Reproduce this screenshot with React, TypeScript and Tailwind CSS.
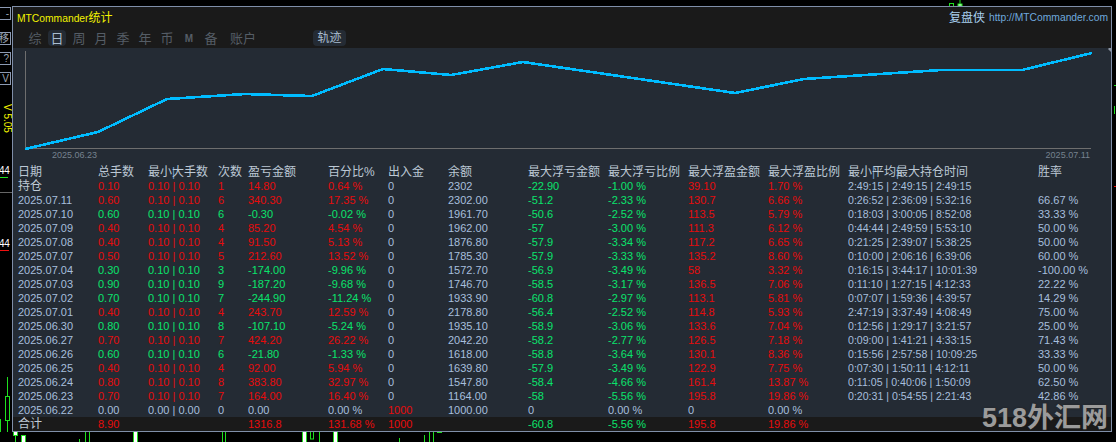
const GRID = "grid grid-cols-[80px_50px_70px_30px_80px_60px_60px_80px_80px_80px_80px_80px_190px_60px] pl-[5px] h-[14px] items-center whitespace-nowrap text-[11px] leading-[14px]";
const RED = "text-[#e60c0c]";
const GREEN = "text-[#0ae36c]";
const PLAIN = "text-[#a7bfdd]";

type R = [string, string, string, string, string, string, string, string, string, string, string, string, string, string, string];
// date, tone, lots, min/max, count, pnl, pct, deposit, balance, floatLoss, lossPct, floatWin, winPct, time, rate
const rows: R[] = [
  ["持仓", "r", "0.10", "0.10 | 0.10", "1", "14.80", "0.64 %", "0", "2302", "-22.90", "-1.00 %", "39.10", "1.70 %", "2:49:15 | 2:49:15 | 2:49:15", ""],
  ["2025.07.11", "r", "0.60", "0.10 | 0.10", "6", "340.30", "17.35 %", "0", "2302.00", "-51.2", "-2.33 %", "130.7", "6.66 %", "0:26:52 | 2:36:09 | 5:32:16", "66.67 %"],
  ["2025.07.10", "g", "0.60", "0.10 | 0.10", "6", "-0.30", "-0.02 %", "0", "1961.70", "-50.6", "-2.52 %", "113.5", "5.79 %", "0:18:03 | 3:00:05 | 8:52:08", "33.33 %"],
  ["2025.07.09", "r", "0.40", "0.10 | 0.10", "4", "85.20", "4.54 %", "0", "1962.00", "-57", "-3.00 %", "111.3", "6.12 %", "0:44:44 | 2:49:59 | 5:53:10", "50.00 %"],
  ["2025.07.08", "r", "0.40", "0.10 | 0.10", "4", "91.50", "5.13 %", "0", "1876.80", "-57.9", "-3.34 %", "117.2", "6.65 %", "0:21:25 | 2:39:07 | 5:38:25", "50.00 %"],
  ["2025.07.07", "r", "0.50", "0.10 | 0.10", "5", "212.60", "13.52 %", "0", "1785.30", "-57.9", "-3.33 %", "135.2", "8.60 %", "0:10:00 | 2:06:16 | 6:39:06", "60.00 %"],
  ["2025.07.04", "g", "0.30", "0.10 | 0.10", "3", "-174.00", "-9.96 %", "0", "1572.70", "-56.9", "-3.49 %", "58", "3.32 %", "0:16:15 | 3:44:17 | 10:01:39", "-100.00 %"],
  ["2025.07.03", "g", "0.90", "0.10 | 0.10", "9", "-187.20", "-9.68 %", "0", "1746.70", "-58.5", "-3.17 %", "136.5", "7.06 %", "0:11:10 | 1:27:15 | 4:12:33", "22.22 %"],
  ["2025.07.02", "g", "0.70", "0.10 | 0.10", "7", "-244.90", "-11.24 %", "0", "1933.90", "-60.8", "-2.97 %", "113.1", "5.81 %", "0:07:07 | 1:59:36 | 4:39:57", "14.29 %"],
  ["2025.07.01", "r", "0.40", "0.10 | 0.10", "4", "243.70", "12.59 %", "0", "2178.80", "-56.4", "-2.52 %", "114.8", "5.93 %", "2:47:19 | 3:37:49 | 4:08:49", "75.00 %"],
  ["2025.06.30", "g", "0.80", "0.10 | 0.10", "8", "-107.10", "-5.24 %", "0", "1935.10", "-58.9", "-3.06 %", "133.6", "7.04 %", "0:12:56 | 1:29:17 | 3:21:57", "25.00 %"],
  ["2025.06.27", "r", "0.70", "0.10 | 0.10", "7", "424.20", "26.22 %", "0", "2042.20", "-58.2", "-2.77 %", "126.5", "7.18 %", "0:09:00 | 1:41:21 | 4:33:15", "71.43 %"],
  ["2025.06.26", "g", "0.60", "0.10 | 0.10", "6", "-21.80", "-1.33 %", "0", "1618.00", "-58.8", "-3.64 %", "130.1", "8.36 %", "0:15:56 | 2:57:58 | 10:09:25", "33.33 %"],
  ["2025.06.25", "r", "0.40", "0.10 | 0.10", "4", "92.00", "5.94 %", "0", "1639.80", "-57.9", "-3.49 %", "122.9", "7.75 %", "0:07:30 | 1:50:11 | 4:12:11", "50.00 %"],
  ["2025.06.24", "r", "0.80", "0.10 | 0.10", "8", "383.80", "32.97 %", "0", "1547.80", "-58.4", "-4.66 %", "161.4", "13.87 %", "0:11:05 | 0:40:06 | 1:50:09", "62.50 %"],
  ["2025.06.23", "r", "0.70", "0.10 | 0.10", "7", "164.00", "16.40 %", "0", "1164.00", "-58", "-5.56 %", "195.8", "19.86 %", "0:20:31 | 0:54:55 | 2:21:43", "42.86 %"],
  ["2025.06.22", "n", "0.00", "0.00 | 0.00", "0", "0.00", "0.00 %", "1000", "1000.00", "0", "0.00 %", "0", "0.00 %", "", ""],
];

function DataRow({ r }: { r: R }) {
  const [date, tone, lots, minMax, count, pnl, pct, dep, bal, fl, flp, fw, fwp, time, rate] = r;
  const t = tone === "r" ? RED : tone === "g" ? GREEN : PLAIN;
  const neutral = tone === "n";
  const head = date === "持仓";
  return (
    <div className={GRID}>
      <span className={head ? "text-[12px] text-[#c0cbd6]" : PLAIN}>{date}</span>
      <span className={t}>{lots}</span>
      <span className={t}>{minMax}</span>
      <span className={t}>{count}</span>
      <span className={t}>{pnl}</span>
      <span className={t}>{pct}</span>
      <span className={dep === "0" ? PLAIN : RED}>{dep}</span>
      <span className={PLAIN}>{bal}</span>
      <span className={neutral ? PLAIN : GREEN}>{fl}</span>
      <span className={neutral ? PLAIN : GREEN}>{flp}</span>
      <span className={neutral ? PLAIN : RED}>{fw}</span>
      <span className={neutral ? PLAIN : RED}>{fwp}</span>
      <span className={`text-[10.6px] ${PLAIN}`}>{time}</span>
      <span className={PLAIN}>{rate}</span>
    </div>
  );
}

const Pipe = () => <span className="inline-block w-0 text-[#6f9fd0]">|</span>;

function HeaderRow() {
  return (
    <div className={`${GRID} text-[12px] text-[#bcc8d4]`}>
      <span>日期</span>
      <span>总手数</span>
      <span>最小<Pipe />大手数</span>
      <span>次数</span>
      <span>盈亏金额</span>
      <span>百分比%</span>
      <span>出入金</span>
      <span>余额</span>
      <span>最大浮亏金额</span>
      <span>最大浮亏比例</span>
      <span>最大浮盈金额</span>
      <span>最大浮盈比例</span>
      <span>最小<Pipe />平均<Pipe />最大持仓时间</span>
      <span>胜率</span>
    </div>
  );
}

function FooterRow() {
  return (
    <div className={`${GRID} bg-[#1a1a1a]`}>
      <span className="text-[12px] text-[#c0cbd6]">合计</span>
      <span className={RED}>8.90</span>
      <span />
      <span />
      <span className={RED}>1316.8</span>
      <span className={RED}>131.68 %</span>
      <span className={RED}>1000</span>
      <span />
      <span className={GREEN}>-60.8</span>
      <span className={GREEN}>-5.56 %</span>
      <span className={RED}>195.8</span>
      <span className={RED}>19.86 %</span>
      <span />
      <span />
    </div>
  );
}

function GutterButton({ label, className }: { label: string; className: string }) {
  return (
    <div className={`w-[11px] h-[13px] border border-l-0 border-[#8c9ab3] bg-black text-[#9aa5b5] text-[10px] leading-[11px] flex justify-end overflow-hidden ${className}`}>
      <span className="pr-[1px]">{label}</span>
    </div>
  );
}

const Tab = ({ label, active }: { label: string; active?: boolean }) => (
  <span className={`w-[18px] mx-[2px] h-[16px] rounded-sm flex items-center justify-center text-[13px] leading-none ${active ? "bg-[#242b34] text-[#a9bdd0]" : "text-[#555d66]"}`}>
    {label}
  </span>
);

function Chart() {
  const pts = [[25, 149], [98, 132], [167, 99], [245, 94], [293, 95.5], [312, 96], [383, 69], [451, 75], [523, 62], [735, 93], [804, 79], [941, 70], [1022, 70], [1092, 53]];
  return (
    <div className="h-[117px] flex flex-col">
      <svg width="1098" height="102" viewBox="13 48 1098 102" className="block shrink-0">
        <line x1="25.5" y1="51" x2="25.5" y2="148" stroke="#6e6e6e" />
        <line x1="25" y1="148.5" x2="1091" y2="148.5" stroke="#6e6e6e" />
        <polyline points={pts.map((p) => p.join(",")).join(" ")} fill="none" stroke="#00bcff" strokeWidth="2.6" shapeRendering="crispEdges" />
        <polygon points="1108,49 1111,46 1111,52" fill="#8d96a3" />
      </svg>
      <div className="flex justify-between pl-[39px] pr-[21px] text-[9px] leading-[11px] text-[#76828f]">
        <span>2025.06.23</span>
        <span>2025.07.11</span>
      </div>
    </div>
  );
}

export default function App() {
  return (
    <div className="relative w-[1116px] h-[442px] bg-black overflow-hidden flex flex-col font-['Liberation_Sans','Noto_Sans_CJK_SC',sans-serif]">
      <svg width="1116" height="6" className="block shrink-0">
        <rect x="949.5" y="3.5" width="4" height="3" fill="none" stroke="#1fe01f" />
        <rect x="958" y="4" width="4" height="2" fill="#fff" stroke="#1fe01f" />
        <line x1="960" y1="0" x2="960" y2="4" stroke="#1fe01f" />
      </svg>

      <div className="flex h-[426px] shrink-0">
        <div className="w-[12px] shrink-0 h-full flex flex-col overflow-hidden">
          <GutterButton label="-" className="mt-[1px]" />
          <GutterButton label="移" className="mt-[12px]" />
          <GutterButton label="?" className="mt-[7px]" />
          <GutterButton label="V" className="mt-[7px]" />
          <span className="mt-[19px] ml-[1px] h-[32px] [writing-mode:vertical-rl] text-[10px] leading-[10px] text-[#f4f400] whitespace-nowrap">V 5.05</span>
          <span className="mt-[30px] -ml-[1px] text-[10px] leading-[10px] text-white tracking-tight">44</span>
          <div className="mt-[1px] w-[8px] h-px bg-[#1fe01f]" />
          <div className="mt-[14px] h-px bg-[#666]" />
          <span className="mt-[46px] -ml-[1px] text-[10px] leading-[10px] text-white tracking-tight">44</span>
          <div className="mt-[1px] w-[9px] h-px bg-[#f01010]" />
          <svg width="12" height="55" viewBox="0 0 12 55" className="mt-auto block shrink-0">
            <line x1="7.5" y1="0" x2="7.5" y2="55" stroke="#1fe01f" />
            <rect x="5.5" y="19.5" width="4" height="24" fill="#000" stroke="#1fe01f" />
            <line x1="0.5" y1="42" x2="0.5" y2="55" stroke="#1fe01f" />
          </svg>
        </div>

        <div className="w-[1100px] shrink-0 h-full border border-[#7f8ea8] bg-[#242b34] flex flex-col">
          <div className="h-[41px] shrink-0 bg-[#1a1a1a] flex flex-col">
            <div className="flex justify-between items-center h-[21px] pt-[1px] pl-[4px] pr-[3px]">
              <span className="text-[10.3px] leading-none text-[#f2f200]">MTCommander<span className="text-[12px]">统计</span></span>
              <span className="flex items-center gap-[4px] text-[10.3px] leading-none text-[#6fa9dd]">
                <span className="text-[12px] text-[#a9d0ee]">复盘侠</span>
                http://MTCommander.com
              </span>
            </div>
            <div className="flex items-start pl-[11px] h-[18px] pt-[2px]">
              <Tab label="综" />
              <Tab label="日" active />
              <Tab label="周" />
              <Tab label="月" />
              <Tab label="季" />
              <Tab label="年" />
              <Tab label="币" />
              <span className="w-[18px] mx-[2px] h-[16px] flex items-center justify-center text-[10px] font-bold text-[#555d66]">M</span>
              <Tab label="备" />
              <span className="ml-[7px] w-[28px] h-[16px] flex items-center justify-center text-[13px] leading-none text-[#555d66]">账户</span>
              <span className="ml-[56px] w-[33px] h-[16px] rounded-sm bg-[#242b34] flex items-center justify-center text-[12px] leading-none text-[#a9bdd0]">轨迹</span>
            </div>
          </div>

          <Chart />

          <HeaderRow />
          {rows.map((r) => (
            <DataRow key={r[0]} r={r} />
          ))}
          <FooterRow />
        </div>

        <svg width="4" height="426" className="block shrink-0">
          <rect x="2" y="100" width="1" height="8" fill="#1fe01f" />
          <rect x="2" y="180" width="2" height="1" fill="#f01010" />
          <rect x="2" y="79" width="2" height="1" fill="#1fe01f" />
        </svg>
      </div>

      <svg width="1116" height="10" viewBox="0 432 1116 10" className="block shrink-0">
        <g stroke="#1fe01f">
          <rect x="13.5" y="431.5" width="4" height="4" fill="#fff" />
          <line x1="15.5" y1="436" x2="15.5" y2="442" />
          <rect x="21.5" y="435.5" width="4" height="8" fill="#fff" />
          <line x1="79.5" y1="439" x2="79.5" y2="442" />
          <rect x="85.5" y="430" width="4" height="14" fill="none" />
          <rect x="133.5" y="430" width="4" height="14" fill="#fff" />
          <rect x="222.5" y="430" width="3" height="14" fill="none" />
          <rect x="302.5" y="430" width="4" height="14" fill="#fff" />
          <rect x="310.5" y="430" width="3" height="9" fill="none" />
          <line x1="319.5" y1="432" x2="319.5" y2="442" />
          <rect x="333.5" y="430" width="4" height="14" fill="#fff" />
          <line x1="399.5" y1="438" x2="399.5" y2="442" />
          <line x1="424.5" y1="435" x2="424.5" y2="442" />
          <rect x="429.5" y="430" width="4" height="14" fill="none" />
          <line x1="437" y1="432.5" x2="442" y2="432.5" />
        </g>
      </svg>

      <span className="absolute right-[8px] bottom-[9px] text-[27px] leading-[30px] font-bold text-[#9b9b9b] whitespace-nowrap [text-shadow:0_0_2px_#222]">518外汇网</span>
    </div>
  );
}
